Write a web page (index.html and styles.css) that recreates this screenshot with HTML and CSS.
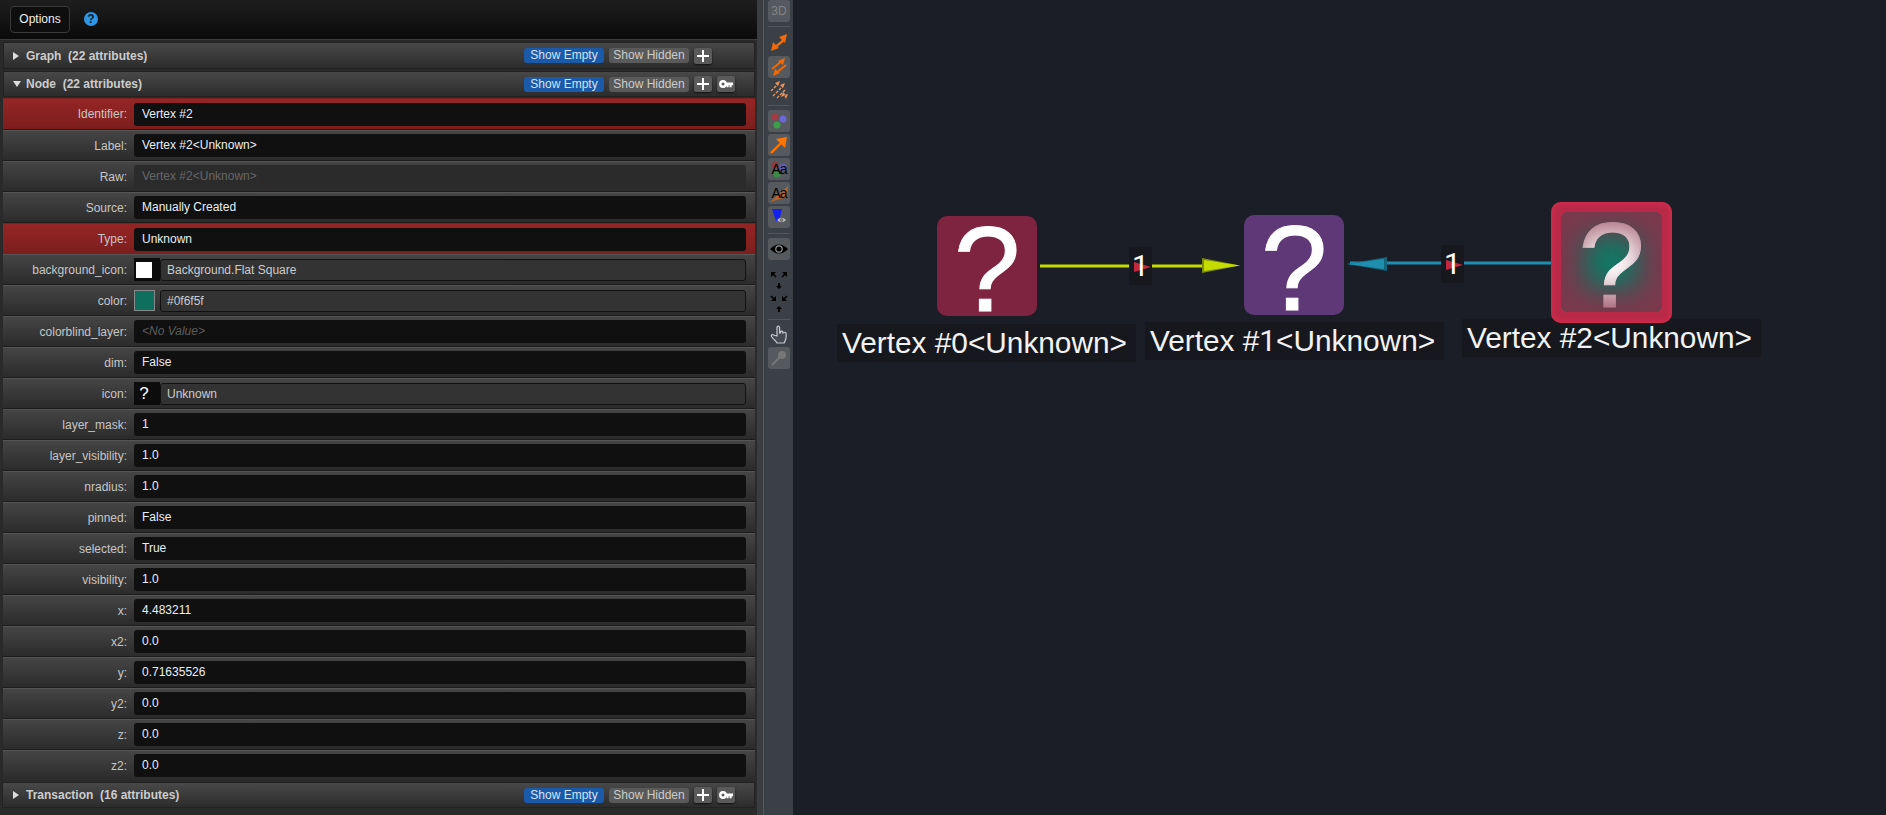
FILE: index.html
```html
<!DOCTYPE html>
<html lang="en">
<head>
  <meta charset="UTF-8">
  <title>Attribute Editor</title>
  <link rel="stylesheet" href="styles.css">
</head>
<body>
  <!-- attribute editor -->
  <div class="panel">
    <div class="options-bar">
      <button class="options-btn">Options</button>
      <span class="help">?</span>
    </div>

    <div class="section-head section-graph">
      <span class="tri tri-right"></span>
      <span class="section-title">Graph&nbsp; (22 attributes)</span>
      <span class="head-btns">
        <span class="pill pill-blue">Show Empty</span>
        <span class="pill">Show Hidden</span>
        <span class="square"><svg width="12" height="12" viewBox="0 0 12 12"><path d="M6 0v12M0 6h12" stroke="#fff" stroke-width="2"/></svg></span>
        <span class="square-gap"></span>
      </span>
    </div>

    <div class="section-head section-node">
      <span class="tri tri-down"></span>
      <span class="section-title">Node&nbsp; (22 attributes)</span>
      <span class="head-btns">
        <span class="pill pill-blue">Show Empty</span>
        <span class="pill">Show Hidden</span>
        <span class="square"><svg width="12" height="12" viewBox="0 0 12 12"><path d="M6 0v12M0 6h12" stroke="#fff" stroke-width="2"/></svg></span>
        <span class="square"><svg width="14" height="8" viewBox="0 0 14 8"><circle cx="4" cy="4" r="2.700" fill="none" stroke="#fff" stroke-width="2.400"/><path d="M6 2.600h8v2.600h-1.400v2h-2v-2h-1v2h-2v-2H6z" fill="#fff"/></svg></span>
      </span>
    </div>

    <div class="rows">
      <div class="row row-key row-first"><label>Identifier:</label><div class="val">Vertex #2</div></div>
      <div class="row"><label>Label:</label><div class="val">Vertex #2&lt;Unknown&gt;</div></div>
      <div class="row"><label>Raw:</label><div class="val val-off">Vertex #2&lt;Unknown&gt;</div></div>
      <div class="row"><label>Source:</label><div class="val">Manually Created</div></div>
      <div class="row row-key"><label>Type:</label><div class="val">Unknown</div></div>
      <div class="row">
        <label>background_icon:</label>
        <div class="cell-icon"><span class="white-square"></span></div>
        <div class="val val-box">Background.Flat Square</div>
      </div>
      <div class="row">
        <label>color:</label>
        <div class="swatch"></div>
        <div class="val val-box val-tight">#0f6f5f</div>
      </div>
      <div class="row"><label>colorblind_layer:</label><div class="val val-none">&lt;No Value&gt;</div></div>
      <div class="row"><label>dim:</label><div class="val">False</div></div>
      <div class="row">
        <label>icon:</label>
        <div class="cell-icon cell-q">?</div>
        <div class="val val-box">Unknown</div>
      </div>
      <div class="row"><label>layer_mask:</label><div class="val">1</div></div>
      <div class="row"><label>layer_visibility:</label><div class="val">1.0</div></div>
      <div class="row"><label>nradius:</label><div class="val">1.0</div></div>
      <div class="row"><label>pinned:</label><div class="val">False</div></div>
      <div class="row"><label>selected:</label><div class="val">True</div></div>
      <div class="row"><label>visibility:</label><div class="val">1.0</div></div>
      <div class="row"><label>x:</label><div class="val">4.483211</div></div>
      <div class="row"><label>x2:</label><div class="val">0.0</div></div>
      <div class="row"><label>y:</label><div class="val">0.71635526</div></div>
      <div class="row"><label>y2:</label><div class="val">0.0</div></div>
      <div class="row"><label>z:</label><div class="val">0.0</div></div>
      <div class="row"><label>z2:</label><div class="val">0.0</div></div>
    </div>

    <div class="section-head section-last">
      <span class="tri tri-right"></span>
      <span class="section-title">Transaction&nbsp; (16 attributes)</span>
      <span class="head-btns">
        <span class="pill pill-blue">Show Empty</span>
        <span class="pill">Show Hidden</span>
        <span class="square"><svg width="12" height="12" viewBox="0 0 12 12"><path d="M6 0v12M0 6h12" stroke="#fff" stroke-width="2"/></svg></span>
        <span class="square"><svg width="14" height="8" viewBox="0 0 14 8"><circle cx="4" cy="4" r="2.700" fill="none" stroke="#fff" stroke-width="2.400"/><path d="M6 2.600h8v2.600h-1.400v2h-2v-2h-1v2h-2v-2H6z" fill="#fff"/></svg></span>
      </span>
    </div>
  </div>

  <div class="divider"></div>

  <!-- graph toolbar -->
  <div class="toolbar">
    <div class="tool tool-bg tool-3d">3D</div>
    <div class="tool-sep sep-first"></div>
    <div class="tool tool-short">
      <svg width="22" height="20" viewBox="0 0 22 20"><path d="M6 14 16 6" stroke="#f06a0a" stroke-width="2.400"/><path d="M19 0 17 9 11 3zM3 17 5 8 11 14z" fill="#f06a0a"/></svg>
    </div>
    <div class="tool tool-bg">
      <svg width="22" height="22" viewBox="0 0 22 22"><path d="M4 13 14 5M18 9 8 17" stroke="#f06a0a" stroke-width="2"/><path d="M17 2 15 9 10 5zM5 20 7 13 12 17z" fill="#f06a0a"/></svg>
    </div>
    <div class="tool tool-short">
      <svg width="22" height="20" viewBox="0 0 22 20"><g stroke="#e8935a" stroke-width="1.400" stroke-dasharray="3 1.200" fill="none"><path d="M3 11 10 4M5 16 15 6M9 18 18 9"/></g><path d="M12 1 10 6 7 3zM17 3 15 8 12 5zM13 17 15 12 18 15zM18 19 20 14 16 15z" fill="#e8935a"/></svg>
    </div>
    <div class="tool-sep"></div>
    <div class="tool tool-bg">
      <svg width="22" height="22" viewBox="0 0 22 22"><circle cx="7" cy="7" r="3.500" fill="#a33a44"/><circle cx="15" cy="9" r="3.500" fill="#6a68d8"/><circle cx="9" cy="15" r="3.500" fill="#3aa048"/></svg>
    </div>
    <div class="tool tool-bg">
      <svg width="22" height="22" viewBox="0 0 22 22"><path d="M3 19 14 8" stroke="#ff7500" stroke-width="2.400"/><path d="M19 3 17 14 8 5z" fill="#ff7500"/></svg>
    </div>
    <div class="tool tool-bg tool-aa">
      <svg class="aa-back" width="22" height="22" viewBox="0 0 22 22"><circle cx="7" cy="7" r="3.500" fill="#8a3a44"/><circle cx="15" cy="9" r="3.500" fill="#5f5db8"/><circle cx="9" cy="16" r="3.500" fill="#3a8a48"/></svg>
      <span class="aa-text">Aa</span>
    </div>
    <div class="tool tool-bg tool-aa">
      <svg class="aa-back" width="22" height="22" viewBox="0 0 22 22"><path d="M2 20 20 4 19 15z" fill="#b5642c"/></svg>
      <span class="aa-text">Aa</span>
    </div>
    <div class="tool tool-bg">
      <svg width="22" height="22" viewBox="0 0 22 22"><path d="M4 3h10l-3 12H8z" fill="#1420f0"/><path d="M9 14q4.500-4.500 9 0q-4.500 4.500-9 0z" fill="#c8c8c8"/><circle cx="13.500" cy="14" r="2" fill="#777"/></svg>
    </div>
    <div class="tool-sep"></div>
    <div class="tool tool-bg">
      <svg width="22" height="22" viewBox="0 0 22 22"><path d="M2 11q9-9 18 0q-9 9-18 0z" fill="#000"/><circle cx="11" cy="11" r="3.800" fill="#999"/><circle cx="11" cy="11" r="2.600" fill="#000"/></svg>
    </div>
    <div class="tool tool-tall">
      <svg width="22" height="46" viewBox="0 0 22 46">
        <path d="M3 1h5L3 6zM19 1h-5l5 5zM10 12h2v3h2l-3 3-3-3h2zM8 30H3l5-5zM14 30h5l-5-5zM11 35l3 3h-2v3h-2v-3H8z" fill="#000"/>
        <path d="M4 2 8 6M18 2 14 6M3 25 7 29M19 25 15 29" stroke="#000" stroke-width="1.600"/>
      </svg>
    </div>
    <div class="tool-sep sep-last"></div>
    <div class="tool">
      <svg width="22" height="22" viewBox="0 0 22 22"><path d="M9 13V4.500a1.300 1.300 0 0 1 2.600 0V10l1-.3V9a1.200 1.200 0 0 1 2.300 0v1l1-.2a1.200 1.200 0 0 1 2.200.5V14c0 3-1.500 5-2 6H9c-1-2-4-4-5.500-6.500-.8-1.500 1-2.500 2-1.500z" fill="#444a50" stroke="#c8c8c8" stroke-width="1.200"/></svg>
    </div>
    <div class="tool tool-bg">
      <svg width="22" height="22" viewBox="0 0 22 22"><path d="M4 18 12 10" stroke="#777" stroke-width="2"/><circle cx="14" cy="8" r="4" fill="#777"/></svg>
    </div>
  </div>

  <!-- graph view -->
  <div class="canvas">
    <svg class="edges" width="1093" height="815" viewBox="793 0 1093 815">
      <path d="M1040 266H1205" stroke="#c5dc00" stroke-width="3"/>
      <path d="M1202 258 1240 265.500 1202 273z" fill="#7d8d10"/>
      <path d="M1204 260 1240 265.500 1204 271z" fill="#c5dc00"/>
      <path d="M1350 263H1565" stroke="#1f8fb0" stroke-width="3"/>
      <path d="M1387 257 1347 264 1387 271z" fill="#15647c"/>
      <path d="M1384 259 1347 264 1384 269z" fill="#1f8fb0"/>
    </svg>

    <div class="node-label label-0">Vertex #0&lt;Unknown&gt;</div>
    <div class="node-label label-1">Vertex #<span class="digit">1</span>&lt;Unknown&gt;</div>
    <div class="node-label label-2">Vertex #2&lt;Unknown&gt;</div>

    <div class="node node-0">?</div>
    <div class="node node-1">?</div>
    <div class="node-selected">
      <div class="node node-2">?<span class="glow"></span></div>
    </div>

    <div class="edge-label edge-a"><span class="flag"></span><span class="edge-num">1</span></div>
    <div class="edge-label edge-b"><span class="flag"></span><span class="edge-num">1</span></div>
  </div>
</body>
</html>
```

FILE: styles.css
```css
* {
  margin: 0;
  padding: 0;
  box-sizing: border-box;
}
body {
  display: flex;
  width: 1886px;
  height: 815px;
  overflow: hidden;
  font-family: "Liberation Sans", Arial, sans-serif;
  font-size: 12px;
  background: #1b1e26;
}

/* attribute panel */
.panel {
  width: 757px;
  height: 815px;
  flex: none;
  padding-right: 2px;
  background: #2a2a2a;
}
.options-bar {
  display: flex;
  align-items: center;
  gap: 14px;
  height: 40px;
  margin: 0 -2px 2px 0;
  padding: 0 0 1px 10px;
  background: linear-gradient(#1e1e1e, #0a0a0a);
  border-bottom: 1px solid #3c3c3c;
}
.options-btn {
  width: 60px;
  height: 27px;
  color: #eee;
  font: 12px "Liberation Sans", Arial, sans-serif;
  background: #0e0e0e;
  border: 1px solid #3a3a3a;
  border-radius: 4px;
}
.help {
  width: 14px;
  height: 14px;
  color: #0f1d2a;
  font-size: 12px;
  font-weight: bold;
  line-height: 14px;
  text-align: center;
  background: #2d96e8;
  border-radius: 50%;
}
.section-head {
  display: flex;
  align-items: center;
  height: 27px;
  margin-left: 3px;
  padding-left: 9px;
  background: linear-gradient(#484848, #2c2c2c);
  border: 1px solid #222;
}
.section-graph {
  margin-bottom: 2px;
}
.section-node {
  height: 26px;
  margin-bottom: 1px;
}
.section-last {
  height: 26px;
  margin: 2px 0 0 2px;
  padding-left: 10px;
}
.tri {
  width: 0;
  height: 0;
  margin-right: 7px;
  border-style: solid;
}
.tri-right {
  border-width: 4px 0 4px 6px;
  border-color: transparent transparent transparent #ddd;
}
.tri-down {
  margin-right: 5px;
  border-width: 6px 4px 0 4px;
  border-color: #ddd transparent transparent transparent;
}
.section-title {
  color: #ccc;
  font-weight: bold;
}
.head-btns {
  display: flex;
  align-items: center;
  gap: 5px;
  margin-left: auto;
  padding-right: 19px;
}
.pill {
  width: 80px;
  height: 15px;
  color: #ccc;
  line-height: 15px;
  text-align: center;
  background: #5a5a5a;
  border-radius: 3px;
}
.pill-blue {
  color: #d5e2f2;
  background: #1b5aa8;
}
.square,
.square-gap {
  display: flex;
  align-items: center;
  justify-content: center;
  width: 18px;
  height: 16px;
}
.square {
  background: #5a5a5a;
  border-radius: 2px;
  box-shadow: 0 1px 2px #111;
}

/* attribute rows */
.rows {
  height: 682px;
  margin-left: 3px;
  background: #1c1c1c;
}
.row {
  display: flex;
  align-items: center;
  height: 30px;
  margin-bottom: 1px;
  padding-right: 9px;
  background: linear-gradient(#454545, #2b2b2b);
  border-top: 1px solid #555;
}
.row-key {
  height: 31px;
  margin-bottom: 0;
  background: linear-gradient(#952525, #7c1e1e);
  border-top: 1px solid #7c2020;
}
.row-first {
  margin-bottom: 1px;
}
.row label {
  width: 124px;
  flex: none;
  margin-right: 7px;
  color: #c6c6c6;
  text-align: right;
}
.val {
  flex: 1;
  height: 23px;
  padding-left: 8px;
  color: #e8eef5;
  line-height: 23px;
  background: #101010;
  border-radius: 3px;
}
.val-off {
  color: #666;
  background: #2b2b2b;
}
.val-none {
  color: #5c5c5c;
  font-style: italic;
}
.val-box {
  height: 22px;
  padding-left: 6px;
  color: #ccc;
  line-height: 21px;
  background: #333;
  border: 1px solid #111;
}
.val-tight {
  margin-left: 5px;
}
.cell-icon {
  display: flex;
  align-items: center;
  justify-content: center;
  width: 26px;
  height: 23px;
  flex: none;
  background: #0c0c0c;
}
.white-square {
  width: 16px;
  height: 16px;
  margin-right: 6px;
  background: #fff;
}
.cell-q {
  padding-right: 6px;
  color: #fff;
  font-size: 17px;
}
.swatch {
  width: 21px;
  height: 21px;
  flex: none;
  background: #0f6f5f;
  border: 1px solid #888;
}

/* toolbar */
.divider {
  width: 7px;
  height: 815px;
  flex: none;
  background: #3a3e42;
  border-right: 1px solid #55595c;
}
.toolbar {
  display: flex;
  flex-direction: column;
  align-items: center;
  width: 29px;
  height: 815px;
  flex: none;
  gap: 2px;
  padding-left: 1px;
  background: #3b4046;
}
.tool {
  position: relative;
  display: flex;
  align-items: center;
  justify-content: center;
  width: 22px;
  height: 22px;
  flex: none;
  border-radius: 3px;
}
.tool-short {
  height: 20px;
}
.tool-tall {
  height: 46px;
  margin-top: 9px;
}
.tool-bg {
  background: #565a5e;
}
.tool-3d {
  color: #828487;
  font-size: 12px;
}
.tool-sep {
  width: 22px;
  height: 1px;
  margin: 3px 0 2px;
  flex: none;
  background: #53575b;
}
.sep-first {
  margin: 2px 0 5px;
}
.sep-last {
  margin: 0 0 1px;
}
.aa-back {
  position: absolute;
  top: 0;
  left: 0;
}
.aa-text {
  position: relative;
  color: #000;
  font-size: 14px;
  letter-spacing: -1px;
}

/* graph canvas */
.canvas {
  position: relative;
  flex: 1;
  height: 815px;
  background: #1b1e26;
}
.edges {
  position: absolute;
  top: 0;
  left: 0;
}
.node {
  position: absolute;
  width: 100px;
  height: 100px;
  color: #fff;
  font-size: 120px;
  line-height: 106px;
  text-align: center;
  border-radius: 10px;
  -webkit-text-stroke: 1px #fff;
}
.node-0 {
  top: 216px;
  left: 144px;
  background: #7e2340;
}
.node-1 {
  top: 215px;
  left: 451px;
  background: #5f3878;
}
.node-selected {
  position: absolute;
  top: 202px;
  left: 758px;
  width: 121px;
  height: 121px;
  background: #b82a48;
  border-radius: 10px;
  box-shadow: inset 0 0 5px 2px #d62a4c;
}
.node-2 {
  top: 10px;
  left: 10px;
  width: 101px;
  background: #0f7a66;
  border-radius: 8px;
  box-shadow: inset 0 0 30px 16px rgba(72, 58, 64, 0.92);
}
.glow {
  position: absolute;
  top: 0;
  left: 0;
  width: 100%;
  height: 100%;
  border-radius: 8px;
  box-shadow: inset 0 0 30px 20px rgba(140, 55, 80, 0.8);
}
.edge-label {
  position: absolute;
  width: 23px;
  height: 38px;
  color: #fff;
  font-family: Roboto, sans-serif;
  font-size: 30px;
  line-height: 38px;
  text-align: center;
  background: #16181e;
}
.edge-num {
  position: relative;
}
.edge-a {
  top: 247px;
  left: 336px;
}
.edge-b {
  top: 245px;
  left: 648px;
}
.flag {
  position: absolute;
  top: 15px;
  left: 5px;
  width: 0;
  height: 0;
  border-style: solid;
  border-width: 5px 0 5px 17px;
  border-color: transparent transparent transparent #c4283f;
}
.node-label {
  position: absolute;
  height: 38px;
  padding: 0 9px 0 5px;
  color: #f2f2f2;
  font-size: 29.800px;
  line-height: 38px;
  white-space: nowrap;
  background: #16181e;
}
.digit {
  font-family: Roboto, sans-serif;
}
.label-0 {
  top: 324px;
  left: 44px;
}
.label-1 {
  top: 322px;
  left: 352px;
}
.label-2 {
  top: 319px;
  left: 669px;
}
```
